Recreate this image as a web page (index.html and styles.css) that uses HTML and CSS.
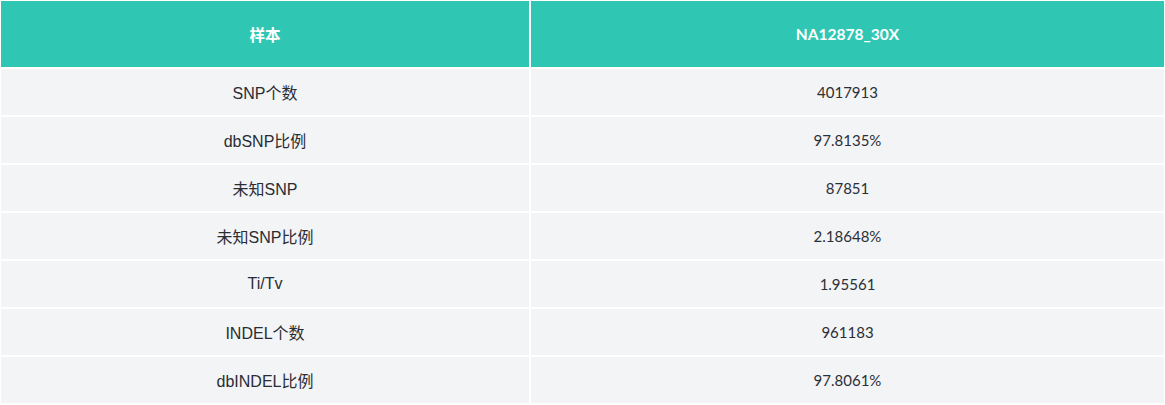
FILE: index.html
```html
<!DOCTYPE html>
<html lang="zh-CN">
<head>
<meta charset="utf-8">
<title>样本统计</title>
<link rel="stylesheet" href="styles.css">
</head>
<body>
<table class="stats">
  <colgroup>
    <col class="col-label">
    <col class="col-value">
  </colgroup>
  <thead>
    <tr><th>样本</th><th>NA12878_30X</th></tr>
  </thead>
  <tbody>
    <tr><td class="label">SNP个数</td><td>4017913</td></tr>
    <tr><td class="label">dbSNP比例</td><td>97.8135%</td></tr>
    <tr><td class="label">未知SNP</td><td>87851</td></tr>
    <tr><td class="label">未知SNP比例</td><td>2.18648%</td></tr>
    <tr><td class="label">Ti/Tv</td><td>1.95561</td></tr>
    <tr><td class="label">INDEL个数</td><td>961183</td></tr>
    <tr><td class="label">dbINDEL比例</td><td>97.8061%</td></tr>
  </tbody>
</table>
</body>
</html>
```
FILE: styles.css
```css
html, body {
  margin: 0;
  padding: 0;
  background: #ffffff;
}

.stats {
  width: 1165px;
  border-collapse: separate;
  border-spacing: 0;
  table-layout: fixed;
  font-family: "Lato", "Noto Sans CJK SC", sans-serif;
  font-size: 15px;
  color: #2b2f36;
}

.col-label { width: 530px; }
.col-value { width: 635px; }

.stats th,
.stats td {
  border: 1px solid #ffffff;
  text-align: center;
  vertical-align: middle;
  padding: 0;
}

.stats th {
  height: 66px;
  background: #2fc7b3;
  color: #ffffff;
  font-weight: 700;
  font-size: 15.5px;
}

.stats td {
  height: 46px;
  background: #f3f4f6;
}

.stats td.label {
  font-family: "Liberation Sans", "Noto Sans CJK SC", sans-serif;
  font-size: 16px;
  color: #2a2d33;
}
```
